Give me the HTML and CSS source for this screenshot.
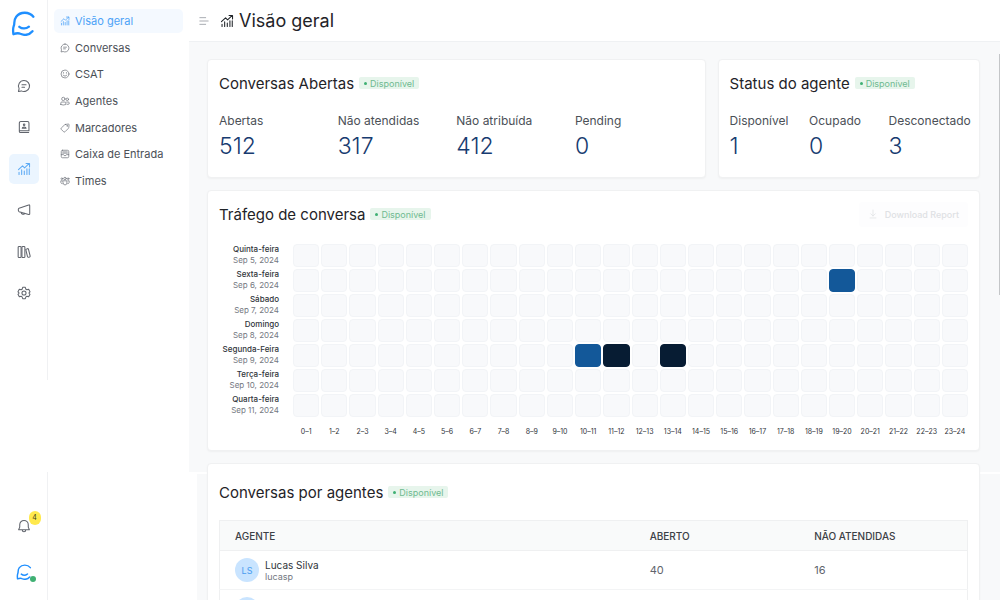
FILE: index.html
```html
<!DOCTYPE html>
<html lang="pt-BR">
<head>
<meta charset="utf-8">
<meta name="viewport" content="width=device-width, initial-scale=1">
<title>Visão geral</title>
<link rel="stylesheet" href="styles.css">
</head>
<body>
<svg class="sprite" aria-hidden="true">
  <symbol id="i-logo" viewBox="0 0 24 24"><path d="M21.500 5.500C17.500 0.500 9 0.300 5 5.500C2 9.500 4 12 2.600 14.500C1.600 17 2 19.500 2.300 22.300C5 21.200 7.200 21 9 21.900C13.500 23.800 18 22.500 20.600 19.400M8 15.200C10.500 17.300 14.500 17.300 17.200 15"/></symbol>
  <symbol id="i-chart" viewBox="0 0 24 24"><path d="M2.500 13L9.500 6.500L13 10L21 2.500M15.500 2.500H21.500V8.500M3.500 17.500V21.500M8 13.500V21.500M12.500 15.500V21.500M17 11.500V21.500M21 11.500V21.500"/></symbol>
  <symbol id="i-chat" viewBox="0 0 24 24"><path d="M12 2.500A9.500 9.500 0 1 1 7.500 20.400L2.500 21.500L3.600 16.500A9.500 9.500 0 0 1 12 2.500ZM8.500 10H15.500M8.500 14H13"/></symbol>
  <symbol id="i-book" viewBox="0 0 24 24"><path d="M4 5A2.500 2.500 0 0 1 6.500 2.500H18A2.500 2.500 0 0 1 20.500 5V18.500H4ZM4 18.500V19.500A2 2 0 0 0 6 21.500H20M9 14C9 11.500 15.500 11.500 15.500 14Z"/><circle cx="12.200" cy="8" r="1.300"/></symbol>
  <symbol id="i-horn" viewBox="0 0 24 24"><path d="M21.800 4.500V18.500C21.800 19.500 21 20 20 19.600L3.500 14.800C1.800 14 1.800 9.500 3.500 8.800L20 3.400C21 3 21.800 3.500 21.800 4.500ZM7 16C7.500 19.500 11.500 20.500 13 17.800"/></symbol>
  <symbol id="i-library" viewBox="0 0 24 24"><rect x="2" y="2.500" width="5" height="19" rx="1.500"/><rect x="8.500" y="2.500" width="5" height="19" rx="1.500"/><path d="M15 7.500L18 6.300Q19.200 6 19.600 7.200L22.500 18.700Q22.700 20 21.600 20.400L19.800 21Q18.500 21.400 18 20Z"/></symbol>
  <symbol id="i-gear" viewBox="0 0 24 24"><circle cx="12" cy="12" r="3.500"/><path d="M9.800 2.300H14.200L15.300 5.500L17 6.500L20 5.600L22.300 10L20.300 12L22.300 14.200L20 18.500L17 17.600L15.300 18.600L14.200 21.700H9.800L8.700 18.600L7 17.600L4 18.500L1.700 14.200L3.700 12L1.700 10L4 5.600L7 6.500L8.700 5.500Z"/></symbol>
  <symbol id="i-bell" viewBox="0 0 24 24"><path d="M12 2.500A7.300 7.300 0 0 0 4.700 9.800V14L2.800 18.500H21.200L19.300 14V9.800A7.300 7.300 0 0 0 12 2.500ZM9 18.700A3 3 0 0 0 15 18.700"/></symbol>
  <symbol id="i-smile" viewBox="0 0 24 24"><circle cx="12" cy="12" r="9.500"/><path d="M7.500 14.500C10 18 14 18 16.500 14.500M8.500 8.500V10M15.500 8.500V10"/></symbol>
  <symbol id="i-people" viewBox="0 0 24 24"><circle cx="8" cy="7" r="4"/><circle cx="17.500" cy="8" r="3"/><path d="M2 20.500V16.500Q2 14.500 4 14.500H12Q14 14.500 14 16.500V20.500Q8 23 2 20.500ZM16 14.500H20Q22 14.500 22 16.500V19Q20 20.500 17 20"/></symbol>
  <symbol id="i-tag" viewBox="0 0 24 24"><path d="M13 3.500L20 2.500Q21.800 2.500 21.800 4.300L21 11Q20.900 12 20 13L12 21Q10.300 22.500 8.700 21L3 15.300Q1.500 13.700 3 12L11 4.500Q12 3.500 13 3.500Z"/><circle cx="17" cy="7" r=".7"/></symbol>
  <symbol id="i-inbox" viewBox="0 0 24 24"><rect x="3" y="3" width="18" height="18" rx="3"/><path d="M3 13.500H8.500C9 17 15 17 15.500 13.500H21M6.500 7H17.500M6.500 10H17.500"/></symbol>
  <symbol id="i-team" viewBox="0 0 24 24"><circle cx="12" cy="6" r="3"/><circle cx="4.500" cy="6.500" r="2"/><circle cx="19.500" cy="6.500" r="2"/><path d="M7.500 11.500H16.500V17Q16 21.500 12 21.500Q8 21.500 7.500 17ZM5 11.500H2V15.500Q2.500 18.500 5.500 18.500M19 11.500H22V15.500Q21.500 18.500 18.500 18.500"/></symbol>
  <symbol id="i-menu" viewBox="0 0 24 24"><path d="M2 4H16M2 12H22M2 20H16"/></symbol>
  <symbol id="i-download" viewBox="0 0 24 24"><path d="M12 2.500V16.500M6.500 11.500L12 17L17.500 11.500M5 21.500H19"/></symbol>
</svg>

<div class="app">
  <aside class="rail">
    <div class="rail-top">
      <a class="logo" href="#" aria-label="Início"><svg class="icon"><use href="#i-logo"/></svg></a>
      <nav class="rail-nav">
        <a class="rail-link" href="#" aria-label="Conversas"><svg class="icon"><use href="#i-chat"/></svg></a>
        <a class="rail-link" href="#" aria-label="Contatos"><svg class="icon"><use href="#i-book"/></svg></a>
        <a class="rail-link active" href="#" aria-label="Relatórios"><svg class="icon"><use href="#i-chart"/></svg></a>
        <a class="rail-link" href="#" aria-label="Campanhas"><svg class="icon"><use href="#i-horn"/></svg></a>
        <a class="rail-link" href="#" aria-label="Central de ajuda"><svg class="icon"><use href="#i-library"/></svg></a>
        <a class="rail-link" href="#" aria-label="Configurações"><svg class="icon"><use href="#i-gear"/></svg></a>
      </nav>
    </div>
    <div class="rail-bottom">
      <button class="rail-link" aria-label="Notificações"><svg class="icon"><use href="#i-bell"/></svg><span class="count">4</span></button>
      <button class="rail-link profile" aria-label="Perfil"><svg class="icon"><use href="#i-logo"/></svg><span class="online"></span></button>
    </div>
  </aside>

  <nav class="sidebar">
    <ul class="menu">
      <li><a class="menu-link active" href="#"><svg class="icon"><use href="#i-chart"/></svg>Visão geral</a></li>
      <li><a class="menu-link" href="#"><svg class="icon"><use href="#i-chat"/></svg>Conversas</a></li>
      <li><a class="menu-link" href="#"><svg class="icon"><use href="#i-smile"/></svg>CSAT</a></li>
      <li><a class="menu-link" href="#"><svg class="icon"><use href="#i-people"/></svg>Agentes</a></li>
      <li><a class="menu-link" href="#"><svg class="icon"><use href="#i-tag"/></svg>Marcadores</a></li>
      <li><a class="menu-link" href="#"><svg class="icon"><use href="#i-inbox"/></svg>Caixa de Entrada</a></li>
      <li><a class="menu-link" href="#"><svg class="icon"><use href="#i-team"/></svg>Times</a></li>
    </ul>
  </nav>

  <div class="page">
    <header class="topbar">
      <button class="toggle" aria-label="Alternar menu"><svg class="icon"><use href="#i-menu"/></svg></button>
      <svg class="icon topbar-icon"><use href="#i-chart"/></svg>
      <h1>Visão geral</h1>
    </header>
    <main class="content">
      <div class="summary">
        <section class="card">
          <div class="card-head"><h2>Conversas Abertas</h2><span class="live">Disponível</span></div>
          <dl class="stats four">
            <div><dt>Abertas</dt><dd>512</dd></div>
            <div><dt>Não atendidas</dt><dd>317</dd></div>
            <div><dt>Não atribuída</dt><dd>412</dd></div>
            <div><dt>Pending</dt><dd>0</dd></div>
          </dl>
        </section>
        <section class="card">
          <div class="card-head"><h2>Status do agente</h2><span class="live">Disponível</span></div>
          <dl class="stats three">
            <div><dt>Disponível</dt><dd>1</dd></div>
            <div><dt>Ocupado</dt><dd>0</dd></div>
            <div><dt>Desconectado</dt><dd>3</dd></div>
          </dl>
        </section>
      </div>

      <section class="card">
        <div class="card-head"><h2>Tráfego de conversa</h2><span class="live">Disponível</span>
          <button class="download"><svg class="icon"><use href="#i-download"/></svg>Download Report</button>
        </div>
        <div class="heatmap" id="heatmap"></div>
      </section>

      <section class="card agents">
        <div class="card-head"><h2>Conversas por agentes</h2><span class="live">Disponível</span></div>
        <table>
          <thead><tr><th class="col-agent">Agente</th><th class="col-open">Aberto</th><th>Não atendidas</th></tr></thead>
          <tbody>
            <tr>
              <td><div class="agent"><span class="avatar">LS</span><div><div class="name">Lucas Silva</div><div class="mail">lucasp</div></div></div></td>
              <td>40</td><td>16</td>
            </tr>
            <tr><td><div class="agent"><span class="avatar"></span></div></td><td></td><td></td></tr>
          </tbody>
        </table>
      </section>
    </main>
    <div class="scrollbar"></div>
  </div>
</div>
<script src="app.js"></script>
</body>
</html>
```
FILE: styles.css
```css
* { box-sizing: border-box; }
body { margin: 0; font-family: Inter, "Noto Sans", sans-serif; font-size: 11px; color: #3c4858; background: #fff; }
h1, h2, dl, dd, ul { margin: 0; padding: 0; font-weight: 400; }
ul { list-style: none; }
button { font: inherit; color: inherit; border: 0; background: none; padding: 0; }
a { color: inherit; text-decoration: none; }
.sprite { position: absolute; width: 0; height: 0; }
.icon { display: block; flex: none; width: 14px; height: 14px; fill: none; stroke: currentColor; stroke-width: 1.8; stroke-linecap: round; stroke-linejoin: round; }

.app { display: flex; height: 100vh; overflow: hidden; }

.rail { flex: 0 0 48px; display: flex; flex-direction: column; justify-content: space-between; color: #60646c; }
.rail-top, .rail-bottom { display: flex; flex-direction: column; align-items: center; border-right: 1px solid #f0f1f3; }
.rail-top { padding: 11px 0 72px; gap: 35px; }
.rail-bottom { padding: 39px 0 13px; gap: 16px; }
.logo { color: #1f8fff; }
.logo .icon { width: 25px; height: 25px; stroke-width: 2.2; }
.rail-nav { display: flex; flex-direction: column; justify-content: space-between; height: 237px; }
.rail-link { position: relative; display: grid; place-items: center; width: 30px; height: 30px; border-radius: 5px; }
.rail-link.active { background: #ebf5ff; color: #5eabf5; }
.profile { color: #1f8fff; }
.profile .icon { width: 16px; height: 16px; stroke-width: 2.2; }
.count { position: absolute; top: 0; right: -2px; width: 12px; height: 14px; border-radius: 6px; background: #ffe94d; color: #3b3a20; font-size: 7px; line-height: 14px; text-align: center; }
.online { position: absolute; right: 3px; bottom: 5px; width: 6px; height: 6px; border-radius: 50%; background: #3fb073; }

.sidebar { flex: 0 0 141px; padding: 9px 6px; }
.menu { display: flex; flex-direction: column; justify-content: space-between; height: 184px; }
.menu-link { display: flex; align-items: center; gap: 5px; height: 24px; padding: 0 6px; border-radius: 5px; color: #4b5057; white-space: nowrap; }
.menu-link .icon { width: 10px; height: 10px; color: #74787f; }
.menu-link.active, .menu-link.active .icon { color: #4da3f7; }
.menu-link.active { background: #f4f9ff; }

.page { position: relative; flex: 1; min-width: 0; display: flex; flex-direction: column; }
.topbar { flex: none; display: flex; align-items: center; height: 42px; padding: 1px 10px 0; border-bottom: 1px solid #eff1f3; color: #1f2328; }
.toggle { color: #8b9097; margin-right: 11px; }
.toggle .icon { width: 10px; height: 10px; }
.topbar-icon { margin-right: 5px; }
.topbar h1 { font-size: 18px; line-height: 24px; }

.content { flex: 1; min-height: 0; overflow: hidden; display: flex; flex-direction: column; gap: 12px; padding: 17px 20px 0 18px;
  background:
    linear-gradient(#fff, #fff) 0 430px / 100% 2px no-repeat,
    linear-gradient(#fff, #fff) 0 430px / 8px 100% no-repeat,
    #f8f9fa; }
.summary { flex: none; display: grid; grid-template-columns: minmax(0, 19fr) minmax(0, 10fr); gap: 12px; }
.card { flex: none; padding: 12px 11px; background: #fff; border: 1px solid #f0f1f2; border-radius: 4px; box-shadow: 0 1px 2px #0000000a; }
.card-head { display: flex; align-items: center; gap: 5px; height: 24px; color: #1f2328; }
.card-head h2 { font-size: 15px; line-height: 24px; white-space: nowrap; }
.live { display: flex; align-items: center; gap: 3px; height: 12px; margin-bottom: 2px; padding: 0 5px; border-radius: 2px; background: #e7f5ec; color: #6fba90; font-size: 9px; }
.live::before { content: ""; width: 3px; height: 3px; border-radius: 50%; background: #3fb073; }
.stats { display: grid; margin-top: 16px; padding-bottom: 3px; }
.four { grid-template-columns: repeat(4, minmax(0, 1fr)); }
.three { grid-template-columns: repeat(3, minmax(0, 1fr)); }
.stats dt { font-size: 12px; line-height: 18px; white-space: nowrap; color: #4b5057; }
.stats dd { font-size: 23px; font-weight: 300; line-height: 32px; color: #173b70; }

.download { display: flex; align-items: center; gap: 7px; height: 25px; margin: 0 0 2px auto; padding: 0 9px; border-radius: 3px; background: #fdfdfe; color: #dfe1e4; font-size: 9px; font-weight: 500; }
.download .icon { width: 10px; height: 10px; }
.heatmap { display: grid; grid-template-columns: 72px repeat(24, minmax(0, 1fr)); grid-template-rows: repeat(7, 23px) 17px; gap: 2px; padding: 17px 0 2px; }
.day { padding-right: 12px; font-size: 8px; line-height: 11px; text-align: right; color: #74787f; white-space: nowrap; }
.day b { display: block; font-weight: 500; color: #30343a; }
.cell { border: 1px solid #f2f4f7; border-radius: 4px; background: #f8f9fb; }
.cell.mid { background: #135899; border-color: #135899; }
.cell.high { background: #071c33; border-color: #071c33; }
.hour { align-self: end; font-size: 7px; line-height: 8px; text-align: center; color: #30343a; white-space: nowrap; }

.agents { padding-top: 17px; }
.agents table { width: 100%; margin-top: 15px; border-collapse: collapse; table-layout: fixed; border: 1px solid #eff0f1; color: #60646c; }
.agents th { height: 30px; padding: 0 15px; background: #f9fafa; border-bottom: 1px solid #eff0f1; color: #3c4046; font-size: 10px; font-weight: 500; text-align: left; text-transform: uppercase; }
.agents td { height: 39px; padding: 0 15px; border-bottom: 1px solid #f3f4f5; }
.col-agent { width: 55.5%; }
.col-open { width: 22%; }
.agent { display: flex; align-items: center; gap: 6px; }
.avatar { display: grid; place-items: center; width: 24px; height: 24px; border-radius: 50%; background: #c9e4ff; color: #4a9df0; font-size: 9px; }
.name { font-size: 10px; line-height: 12px; color: #30343a; }
.mail { font-size: 9px; line-height: 11px; color: #74787f; }
.scrollbar { position: absolute; top: 54px; right: 0; width: 1px; height: 241px; background: #c4c6c8; }
```
FILE: app.js
```js
const days = [
  ["Quinta-feira", "Sep 5, 2024", {}],
  ["Sexta-feira", "Sep 6, 2024", { 19: "mid" }],
  ["Sábado", "Sep 7, 2024", {}],
  ["Domingo", "Sep 8, 2024", {}],
  ["Segunda-Feira", "Sep 9, 2024", { 10: "mid", 11: "high", 13: "high" }],
  ["Terça-feira", "Sep 10, 2024", {}],
  ["Quarta-feira", "Sep 11, 2024", {}],
];
const hours = [...Array(24).keys()];
const rows = days.map(([name, date, levels]) =>
  `<div class="day"><b>${name}</b>${date}</div>` +
  hours.map((h) => `<div class="cell ${levels[h] || ""}"></div>`).join(""));
const labels = "<div></div>" + hours.map((h) => `<div class="hour">${h}–${h + 1}</div>`).join("");
document.getElementById("heatmap").innerHTML = rows.join("") + labels;
```
